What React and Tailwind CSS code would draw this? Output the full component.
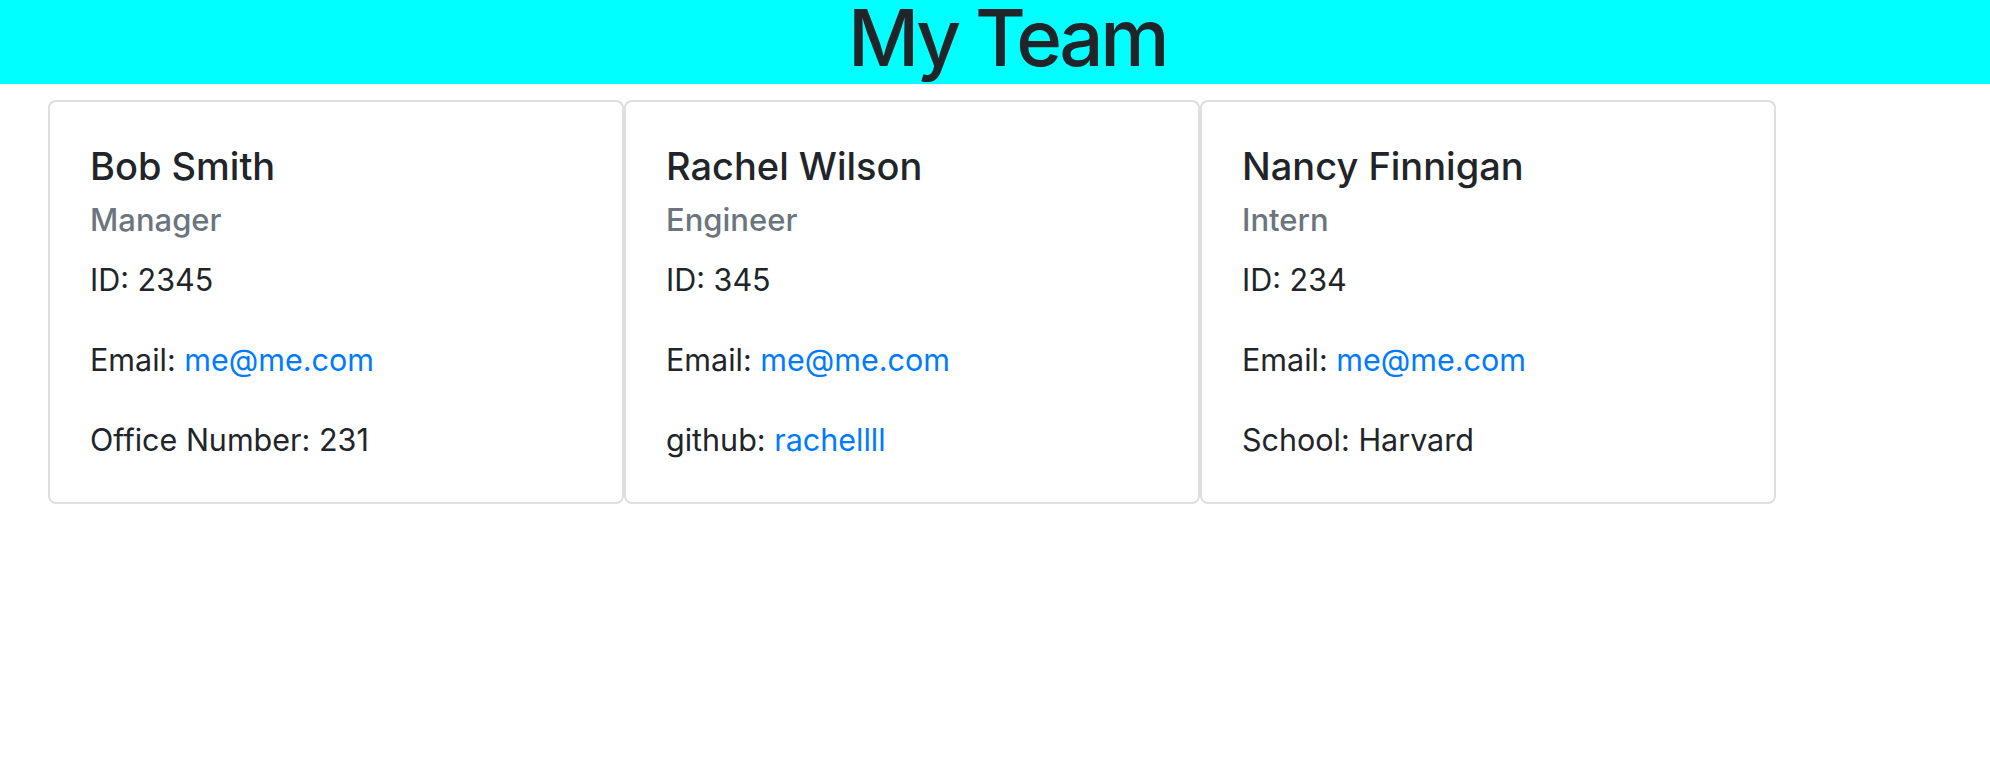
const team = [
  {
    name: 'Bob Smith',
    role: 'Manager',
    id: 2345,
    email: 'me@me.com',
    extra: { label: 'Office Number', value: '231' },
  },
  {
    name: 'Rachel Wilson',
    role: 'Engineer',
    id: 345,
    email: 'me@me.com',
    extra: { label: 'github', value: 'rachellll', link: true },
  },
  {
    name: 'Nancy Finnigan',
    role: 'Intern',
    id: 234,
    email: 'me@me.com',
    extra: { label: 'School', value: 'Harvard' },
  },
];

function EmployeeCard({ person }) {
  return (
    <div className="w-[576px] shrink-0 border-2 border-[#dfdfdf] rounded-[8px] bg-white px-[40px] pt-[40px] pb-[38px]">
      <h5 className="text-[38px] leading-[48px] font-medium text-[#212529]">{person.name}</h5>
      <h6 className="mt-[11px] text-[31px] leading-[38px] font-medium text-[#6c757d]">{person.role}</h6>
      <p className="mt-[17px] text-[30.5px] leading-[48px] text-[#212529]">ID: {person.id}</p>
      <p className="mt-[32px] text-[30.5px] leading-[48px] text-[#212529]">
        Email: <a href={`mailto:${person.email}`} className="text-[#007bff]">{person.email}</a>
      </p>
      <p className="mt-[32px] text-[30.5px] leading-[48px] text-[#212529]">
        {person.extra.label}:{' '}
        {person.extra.link ? (
          <a href="#" className="text-[#007bff]">{person.extra.value}</a>
        ) : (
          person.extra.value
        )}
      </p>
    </div>
  );
}

export default function App() {
  return (
    <div className="min-h-screen bg-white font-['Inter','Liberation_Sans',sans-serif]">
      <header className="h-[84px] bg-[#00ffff] pl-[24px] text-center">
        <h1 className="text-[78px] leading-[75px] font-medium tracking-[-3.5px] text-[#212529]">My Team</h1>
      </header>

      <div className="mt-[16px] flex pl-[48px]">
        {team.map((p) => (
          <EmployeeCard key={p.id} person={p} />
        ))}
      </div>
    </div>
  );
}
